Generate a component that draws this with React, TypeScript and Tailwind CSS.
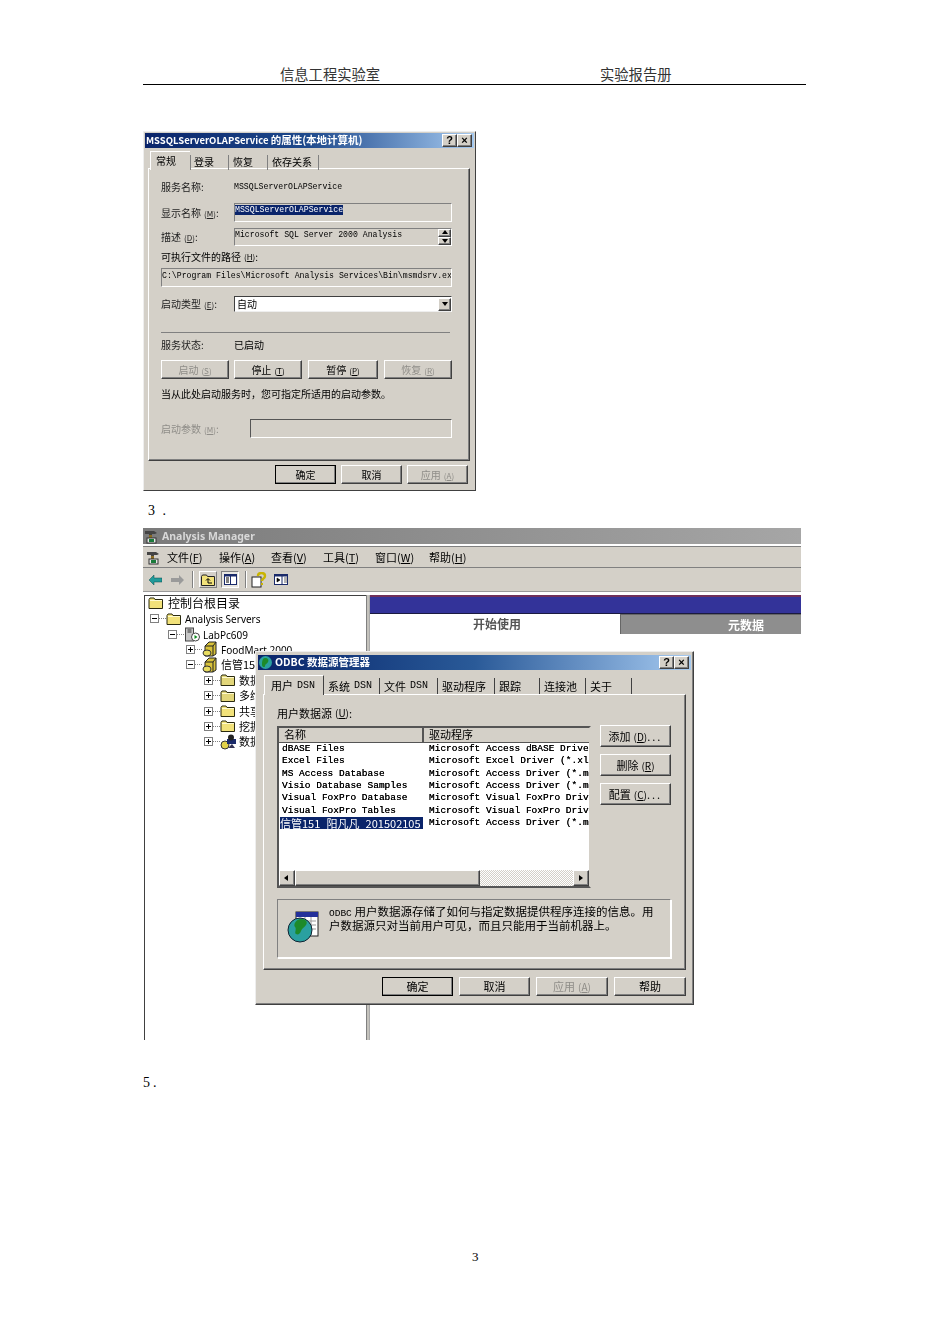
import React from "react";

const ui = "font-['Noto_Sans_CJK_SC','Noto_Sans',sans-serif]";
const mono = "font-['Liberation_Mono','Noto_Sans_CJK_SC',monospace]";
const raised = "border border-t-white border-l-white border-r-[#404040] border-b-[#404040] shadow-[inset_-1px_-1px_0_#808080] bg-[#d4d0c8]";
const sunken = "border border-t-[#808080] border-l-[#808080] border-r-white border-b-white";

function Key({ k, big }: { k: string; big?: boolean }) {
  return (
    <span className={`${big ? "text-[10px]" : "text-[8px]"} ml-[3px]`}>
      (<span className="underline">{k}</span>)
    </span>
  );
}

function Btn({ label, w, h = 19, def, off, size = "text-[10px]" }: { label: React.ReactNode; w: number; h?: number; def?: boolean; off?: boolean; size?: string }) {
  return (
    <div
      className={`${raised} ${def ? "outline outline-1 outline-black -outline-offset-1" : ""} ${off ? "text-[#8f8d88]" : "text-black"} ${size} flex items-center justify-center leading-none shrink-0 whitespace-nowrap`}
      style={{ width: w, height: h }}
    >
      <span>{label}</span>
    </div>
  );
}

function CapBtn({ children }: { children: React.ReactNode }) {
  return <div className={`${raised} w-[15px] h-[13px] flex items-center justify-center text-[11px] font-bold text-black leading-none font-['Liberation_Sans',sans-serif]`}>{children}</div>;
}

function Arrow({ dir }: { dir: "up" | "down" | "left" | "right" }) {
  const p = { up: "1,5 4,1 7,5", down: "1,2 7,2 4,6", left: "5,1 5,7 1,4", right: "2,1 2,7 6,4" }[dir];
  return (
    <svg width="8" height="8" viewBox="0 0 8 8">
      <polygon points={p} fill="#000" />
    </svg>
  );
}

function PropsWindow() {
  const lab = "w-[73px] shrink-0 text-[10px] leading-none text-[#222] whitespace-nowrap";
  const small = `${mono} text-[8.2px]`;
  return (
    <div className={`${ui} blur-[0.3px] mt-[46px] w-[333px] h-[360px] bg-[#d4d0c8] border border-l-[#eee] border-t-[#eee] border-r-[#404040] border-b-[#404040] px-[1px] pt-[1px] flex flex-col`}>
      <div className="h-[15px] bg-linear-to-r from-[#0a246a] via-[#1f4a8c] to-[#a6caf0] flex items-center pl-[1px] pr-[2px] justify-between shrink-0">
        <span className="text-white text-[9.5px] font-bold leading-none whitespace-nowrap">
          MSSQLServerOLAPService <span className="text-[10.5px]">的属性(本地计算机)</span>
        </span>
        <div className="flex"><CapBtn>?</CapBtn><CapBtn>×</CapBtn></div>
      </div>
      <div className="ml-[5px] mt-[3px] h-[19px] flex text-[10px] leading-none items-center shrink-0 relative z-10">
        <div className="w-[40px] h-[19px] bg-[#d4d0c8] border-t border-l border-white flex items-center pl-[5px]">常规</div>
        <div className="w-[38px] h-[15px] mt-[3px] border-l border-[#808080] flex items-center pl-[3px]">登录</div>
        <div className="w-[39px] h-[15px] mt-[3px] border-l border-[#808080] flex items-center pl-[4px]">恢复</div>
        <div className="w-[52px] h-[15px] mt-[3px] border-x border-[#808080] flex items-center pl-[4px]">依存关系</div>
      </div>
      <div className="mx-[3px] -mt-[2px] w-[322px] h-[293px] border border-t-white border-l-white border-r-[#404040] border-b-[#404040] shadow-[inset_-1px_-1px_0_#808080] pl-[12px] shrink-0">
        <div className="w-[291px] flex flex-col">
          <div className="mt-[11px] h-[14px] flex items-center">
            <span className={lab}>服务名称:</span>
            <span className={`${small} leading-none`}>MSSQLServerOLAPService</span>
          </div>
          <div className="mt-[9px] h-[19px] flex items-center">
            <span className={lab}>显示名称<Key k="M" />:</span>
            <div className={`${sunken} flex-1 h-full`}>
              <span className={`${small} block w-fit bg-[#0a246a] text-white leading-[10px] mt-[1px]`}>MSSQLServerOLAPService</span>
            </div>
          </div>
          <div className="mt-[6px] h-[18px] flex items-center">
            <span className={lab}>描述<Key k="D" />:</span>
            <div className={`${sunken} flex-1 h-full flex justify-between`}>
              <span className={`${small} leading-[10px] mt-[1px] whitespace-nowrap`}>Microsoft SQL Server 2000 Analysis</span>
              <div className="flex flex-col">
                <div className={`${raised} w-[13px] h-[8px] flex items-center justify-center`}><Arrow dir="up" /></div>
                <div className={`${raised} w-[13px] h-[8px] flex items-center justify-center`}><Arrow dir="down" /></div>
              </div>
            </div>
          </div>
          <div className="mt-[4px] h-[14px] flex items-center text-[10px] leading-none whitespace-pre">可执行文件的路径<Key k="H" />:</div>
          <div className={`${sunken} mt-[4px] h-[19px]`}>
            <div className={`${small} leading-[14px] whitespace-nowrap overflow-hidden`}>C:\Program Files\Microsoft Analysis Services\Bin\msmdsrv.ex</div>
          </div>
          <div className="mt-[9px] h-[16px] flex items-center">
            <span className={lab}>启动类型<Key k="E" />:</span>
            <div className="flex-1 h-full bg-white border border-t-[#404040] border-l-[#404040] border-r-white border-b-[#eee] flex items-center justify-between">
              <span className="text-[10px] leading-none pl-[2px]">自动</span>
              <div className={`${raised} w-[13px] h-[13px] flex items-center justify-center`}><Arrow dir="down" /></div>
            </div>
          </div>
          <div className="mt-[20px] h-[2px] border-t border-[#808080] w-[289px]" />
          <div className="mt-[4px] h-[14px] flex items-center">
            <span className={lab}>服务状态:</span>
            <span className="text-[10px] leading-none">已启动</span>
          </div>
          <div className="mt-[8px] flex">
            <Btn label={<>启动<Key k="S" /></>} w={68} off />
            <div className="w-[5px]" />
            <Btn label={<>停止<Key k="T" /></>} w={68} />
            <div className="w-[6px]" />
            <Btn label={<>暂停<Key k="P" /></>} w={70} />
            <div className="w-[6px]" />
            <Btn label={<>恢复<Key k="R" /></>} w={68} off />
          </div>
          <div className="mt-[8px] h-[14px] flex items-center text-[10px] leading-none whitespace-nowrap">当从此处启动服务时，您可指定所适用的启动参数。</div>
          <div className="mt-[18px] h-[19px] flex items-center">
            <span className="w-[89px] shrink-0 text-[10px] leading-none text-[#8f8d88]">启动参数<Key k="M" />:</span>
            <div className="flex-1 h-full border border-t-[#555] border-l-[#555] border-r-white border-b-white" />
          </div>
        </div>
      </div>
      <div className="mt-[4px] flex justify-end pr-[6px] gap-[5px]">
        <Btn label="确定" w={61} def />
        <Btn label="取消" w={61} />
        <Btn label={<>应用<Key k="A" /></>} w={61} off />
      </div>
    </div>
  );
}

function Folder({ dim }: { dim?: boolean }) {
  return (
    <svg width="16" height="14" viewBox="0 0 16 14" className="shrink-0">
      <path d="M1 12.5V3.5l1-1.5h4l1 1.5h7.5v9z" fill={dim ? "#e2d67a" : "#f2e27a"} stroke="#2a2a10" />
      <path d="M2 4.5h12" stroke="#fffbd0" />
    </svg>
  );
}

function Cube() {
  return (
    <svg width="16" height="16" viewBox="0 0 16 16" className="shrink-0">
      <path d="M7 1h7v12l-3 2H3V5z" fill="#d8c23a" stroke="#222" />
      <path d="M3 5h8v10M11 5l3-4" fill="none" stroke="#222" />
      <ellipse cx="5" cy="12" rx="4" ry="3" fill="#e8dc60" stroke="#333" />
    </svg>
  );
}

function Server() {
  return (
    <svg width="16" height="15" viewBox="0 0 16 15" className="shrink-0">
      <rect x="1.5" y="1" width="8" height="13" fill="#c6c6c6" stroke="#444" />
      <path d="M3.5 3h4M3.5 5h4" stroke="#333" />
      <circle cx="11.5" cy="10" r="4" fill="#fff" stroke="#444" />
      <polygon points="10.5,8 10.5,12 13.5,10" fill="#0a8a1a" />
    </svg>
  );
}

function Roles() {
  return (
    <svg width="16" height="16" viewBox="0 0 16 16" className="shrink-0">
      <ellipse cx="5" cy="11" rx="4" ry="4" fill="#e2d24a" stroke="#333" />
      <rect x="7" y="5" width="9" height="5" fill="#1a2a6a" />
      <circle cx="11" cy="3.5" r="3" fill="#222" />
      <path d="M8 14l4-4 3 4z" fill="#335" />
    </svg>
  );
}

function TreeRow({ level, box, icon, text, sans }: { level: number; box?: "+" | "-"; icon: React.ReactNode; text: string; sans?: boolean }) {
  return (
    <div className="h-[15.4px] flex items-center" style={{ paddingLeft: 5 + level * 18 }}>
      <div className="w-[9px] h-[9px] border border-[#808080] bg-white flex items-center justify-center shrink-0 relative">
        {box ? <span className="block w-[5px] h-[1px] bg-black" /> : null}
        {box === "+" ? <span className="absolute left-[3px] top-[1px] w-[1px] h-[5px] bg-black" /> : null}
      </div>
      <div className="w-[7px] border-t border-dotted border-[#808080] shrink-0" />
      {icon}
      <span className={`ml-[3px] whitespace-nowrap text-black leading-none ${sans ? "text-[10px] pt-[1px] font-['Noto_Sans',sans-serif]" : "text-[11px]"}`}>{text}</span>
    </div>
  );
}

function Menu({ k, name, w }: { k: string; name: string; w: number }) {
  return (
    <div className="text-[11px] leading-none whitespace-nowrap" style={{ width: w }}>
      {name}(<span className="underline">{k}</span>)
    </div>
  );
}

function Globe() {
  return (
    <svg width="32" height="32" viewBox="0 0 32 32" className="shrink-0">
      <rect x="9" y="1" width="22" height="24" fill="#fff" stroke="#222" />
      <rect x="9" y="1" width="22" height="5" fill="#24309a" />
      <path d="M13 10h16M13 14h16M13 18h16M18 6v18M24 6v18" stroke="#999" />
      <circle cx="13" cy="19" r="12" fill="#2aa0a0" stroke="#123" />
      <path d="M14 8c5 0 7 3 5 6s-4 3-5 6-3 4-5 3 1-5-1-7 1-8 6-8z" fill="#1d8a2a" />
    </svg>
  );
}

const Rows: [string, string][] = [
  ["dBASE Files", "Microsoft Access dBASE Drive"],
  ["Excel Files", "Microsoft Excel Driver (*.xl"],
  ["MS Access Database", "Microsoft Access Driver (*.m"],
  ["Visio Database Samples", "Microsoft Access Driver (*.m"],
  ["Visual FoxPro Database", "Microsoft Visual FoxPro Driv"],
  ["Visual FoxPro Tables", "Microsoft Visual FoxPro Driv"],
];

function OdbcDialog() {
  const tab = "h-[16px] mt-[3px] border-r border-[#404040] flex items-center pl-[4px] whitespace-nowrap";
  const dsn = `${mono} text-[10px] ml-[4px]`;
  return (
    <div className={`absolute left-[112px] top-[123px] w-[439px] h-[354px] bg-[#d4d0c8] border border-t-[#eee] border-l-[#eee] border-r-[#404040] border-b-[#404040] shadow-[inset_-1px_-1px_0_#808080] pt-[3px] flex flex-col ${ui}`}>
      <div className="mx-[2px] h-[15px] bg-linear-to-r from-[#0a246a] via-[#2a5a98] to-[#a6caf0] flex items-center justify-between pr-[2px] shrink-0">
        <div className="flex items-center">
          <svg width="15" height="15" viewBox="0 0 15 15"><circle cx="7.5" cy="7.5" r="6.5" fill="#2aa0a0" /><path d="M7 3c3 0 4 2 3 4s-3 2-3 4-3 1-3-1 0-7 3-7z" fill="#1d8a2a" /></svg>
          <span className="ml-[2px] text-white text-[10.5px] font-bold leading-none whitespace-nowrap">ODBC 数据源管理器</span>
        </div>
        <div className="flex"><CapBtn>?</CapBtn><CapBtn>×</CapBtn></div>
      </div>
      <div className="ml-[8px] mt-[5px] h-[20px] flex text-[11px] leading-none relative z-10 shrink-0">
        <div className="w-[60px] h-[20px] bg-[#d4d0c8] border-t border-l border-white border-r border-r-[#404040] flex items-center pl-[6px] whitespace-nowrap">用户<span className={dsn}>DSN</span></div>
        <div className={`${tab} w-[56px]`}>系统<span className={dsn}>DSN</span></div>
        <div className={`${tab} w-[58px]`}>文件<span className={dsn}>DSN</span></div>
        <div className={`${tab} w-[57px]`}>驱动程序</div>
        <div className={`${tab} w-[45px]`}>跟踪</div>
        <div className={`${tab} w-[46px]`}>连接池</div>
        <div className={`${tab} w-[46px]`}>关于</div>
      </div>
      <div className="ml-[7px] -mt-[1px] w-[423px] h-[276px] border border-t-white border-l-white border-r-[#404040] border-b-[#404040] shadow-[inset_-1px_-1px_0_#808080] pl-[13px] shrink-0">
        <div className="mt-[11px] h-[14px] flex items-center text-[11px] leading-none">用户数据源<Key k="U" big />:</div>
        <div className="mt-[6px] flex items-start">
          <div className="w-[314px] h-[162px] bg-white border-2 border-t-[#555] border-l-[#555] border-r-[#d4d0c8] border-b-[#555] shrink-0 flex flex-col overflow-hidden">
            <div className="h-[15px] flex shrink-0 text-[11px] leading-none bg-[#d4d0c8]">
              <div className="w-[145px] border-r-2 border-r-[#555] border-b border-b-[#555] pl-[5px] pb-[2px] flex items-center">名称</div>
              <div className="flex-1 border-b border-b-[#555] pl-[5px] pb-[2px] flex items-center">驱动程序</div>
            </div>
            <div className={`${mono} text-[9.5px] leading-[12.35px] flex-1 whitespace-pre [text-shadow:0_0_0.4px_#000]`}>
              {Rows.map((r) => (
                <div key={r[0]} className="flex h-[12.35px]">
                  <div className="w-[150px] pl-[3px]">{r[0]}</div>
                  <div className="flex-1 overflow-hidden">{r[1]}</div>
                </div>
              ))}
              <div className="flex h-[12.35px]">
                <div className="w-[150px]"><span className={`block w-[143px] ml-[1px] bg-[#0a246a] text-white [text-shadow:none] ${ui} text-[11px] leading-[12px] whitespace-nowrap`}>信管151_阳凡凡_201502105</span></div>
                <div className="flex-1 overflow-hidden">Microsoft Access Driver (*.m</div>
              </div>
            </div>
            <div className="h-[16px] flex shrink-0">
              <div className={`${raised} w-[16px] flex items-center justify-center`}><Arrow dir="left" /></div>
              <div className={`${raised} w-[185px]`} />
              <div className="flex-1 bg-[repeating-conic-gradient(#d4d0c8_0_25%,#fff_0_50%)] bg-[length:2px_2px]" />
              <div className={`${raised} w-[16px] flex items-center justify-center`}><Arrow dir="right" /></div>
            </div>
          </div>
          <div className="ml-[9px] -mt-[1px] flex flex-col gap-[7px]">
            <Btn label={<>添加<Key k="D" big /><span className="tracking-[2px]">...</span></>} w={71} h={22} size="text-[11px]" />
            <Btn label={<>删除<Key k="R" big /></>} w={71} h={22} size="text-[11px]" />
            <Btn label={<>配置<Key k="C" big /><span className="tracking-[2px]">...</span></>} w={71} h={22} size="text-[11px]" />
          </div>
        </div>
        <div className="mt-[11px] w-[394px] h-[59px] border border-t-[#808080] border-l-[#808080] border-r-white border-b-white shadow-[1px_1px_0_#fff] flex items-start pl-[9px] pt-[11px]">
          <Globe />
          <div className="ml-[10px] -mt-[6px] w-[332px] text-[11.5px] leading-[12px] text-black">
            <span className={`${mono} text-[9.5px] leading-none`}>ODBC</span> 用户数据源存储了如何与指定数据提供程序连接的信息。用户数据源只对当前用户可见，而且只能用于当前机器上。
          </div>
        </div>
      </div>
      <div className="mt-[7px] flex ml-[126px] gap-[6px]">
        <Btn label="确定" w={71} def size="text-[11px]" />
        <Btn label="取消" w={71} size="text-[11px]" />
        <Btn label={<>应用<Key k="A" big /></>} w={72} off size="text-[11px]" />
        <Btn label="帮助" w={72} size="text-[11px]" />
      </div>
    </div>
  );
}

function Hammer() {
  return (
    <svg width="15" height="15" viewBox="0 0 15 15" className="shrink-0">
      <path d="M1 2h9l3 2-2 1H8v3H5V5H1z" fill="#444" />
      <rect x="5" y="6" width="3" height="3" fill="#8a6a20" />
      <rect x="3" y="9" width="9" height="5" fill="#e8e8e8" stroke="#333" />
      <rect x="5" y="10" width="5" height="3" fill="#1a7a3a" />
    </svg>
  );
}

function AnalysisManager() {
  return (
    <div className={`relative blur-[0.3px] w-[658px] h-[512px] overflow-hidden bg-white ${ui}`}>
      <div className="h-[16px] bg-linear-to-r from-[#7b7b7b] to-[#a6a6a6] flex items-center pl-[1px]">
        <Hammer />
        <span className="ml-[3px] text-[#d8d8d8] text-[10.5px] font-bold font-['Noto_Sans',sans-serif] leading-none">Analysis Manager</span>
      </div>
      <div className="mt-[2px] h-[22px] bg-[#d4d0c8] border-t border-t-[#808080] border-b border-b-[#808080] flex items-center pl-[3px]">
        <Hammer />
        <div className="ml-[6px] flex items-center">
          <Menu name="文件" k="F" w={52} />
          <Menu name="操作" k="A" w={52} />
          <Menu name="查看" k="V" w={52} />
          <Menu name="工具" k="T" w={52} />
          <Menu name="窗口" k="W" w={54} />
          <Menu name="帮助" k="H" w={40} />
        </div>
      </div>
      <div className="h-[24px] bg-[#d4d0c8] border-b border-b-[#999] flex items-center pl-[6px]">
        <svg width="13" height="10" viewBox="0 0 13 10"><path d="M0 5l5-5v3h8v4H5v3z" fill="#1f9a9a" stroke="#0a4a4a" strokeWidth="0.5" /></svg>
        <svg width="13" height="10" viewBox="0 0 13 10" className="ml-[9px]"><path d="M13 5L8 0v3H0v4h8v3z" fill="#9a9a9a" /></svg>
        <div className="ml-[8px] w-[2px] h-[17px] border-l border-[#808080] border-r border-r-white" />
        <div className="ml-[5px] w-[18px] h-[17px] border border-t-white border-l-white border-r-[#808080] border-b-[#808080] flex items-center justify-center">
          <svg width="14" height="12" viewBox="0 0 14 12"><path d="M.5 11.5v-9l1-1.5h4l1 1.5h7v9z" fill="#f2e27a" stroke="#222" /><path d="M7 9V5M5 6.5L7 4.5 9 6.5M7 9h4" fill="none" stroke="#000" /></svg>
        </div>
        <div className="ml-[4px] w-[18px] h-[17px] border border-t-[#808080] border-l-[#808080] border-r-white border-b-white bg-[#e8e6e0] flex items-center justify-center">
          <svg width="13" height="11" viewBox="0 0 13 11"><rect x=".5" y=".5" width="12" height="10" fill="#fff" stroke="#1a2a6a" /><rect x=".5" y=".5" width="12" height="2" fill="#1a2a6a" /><path d="M6.5 1v9" stroke="#1a2a6a" /><path d="M2 4h3M2 6h3M2 8h3" stroke="#000" /></svg>
        </div>
        <div className="ml-[6px] w-[2px] h-[17px] border-l border-[#808080] border-r border-r-white" />
        <svg width="16" height="16" viewBox="0 0 16 16" className="ml-[4px]"><rect x="1" y="5" width="9" height="10" fill="#fff" stroke="#222" /><path d="M7 4c0-4 7-4 7 0 0 3-3 2-3 5" fill="none" stroke="#c9b400" strokeWidth="2.4" /><rect x="10" y="11" width="2" height="2" fill="#c9b400" /></svg>
        <svg width="15" height="11" viewBox="0 0 15 11" className="ml-[7px]"><rect x=".5" y=".5" width="13" height="10" fill="#fff" stroke="#1a2a6a" /><rect x=".5" y=".5" width="13" height="2" fill="#1a2a6a" /><path d="M8 1v9" stroke="#1a2a6a" /><path d="M3 4l3 2-3 2zM10 4h3M10 6h3M10 8h3" fill="#000" stroke="#000" strokeWidth="0.6" /></svg>
      </div>
      <div className="mt-[3px] flex h-[445px]">
        <div className="ml-[1px] w-[222px] bg-white border-l border-t border-[#404040] shrink-0">
          <div className="-mt-[1px] h-[16px] flex items-center pl-[3px]">
            <Folder />
            <span className="ml-[4px] text-[12px] leading-none">控制台根目录</span>
          </div>
          <TreeRow level={0} box="-" icon={<Folder />} text="Analysis Servers" sans />
          <TreeRow level={1} box="-" icon={<Server />} text="LabPc609" sans />
          <TreeRow level={2} box="+" icon={<Cube />} text="FoodMart 2000" sans />
          <TreeRow level={2} box="-" icon={<Cube />} text="信管151" />
          <TreeRow level={3} box="+" icon={<Folder dim />} text="数据源" />
          <TreeRow level={3} box="+" icon={<Folder dim />} text="多维数据集" />
          <TreeRow level={3} box="+" icon={<Folder />} text="共享维度" />
          <TreeRow level={3} box="+" icon={<Folder />} text="挖掘模型" />
          <TreeRow level={3} box="+" icon={<Roles />} text="数据库角色" />
        </div>
        <div className="w-[4px] bg-[#c4c2bc] border-l border-[#808080] border-r border-r-[#aaa] shrink-0" />
        <div className="flex-1 min-w-0">
          <div className="h-[19px] bg-[#333399] border-t-2 border-t-[#70305a] border-b border-b-[#1a1a40]" />
          <div className="flex h-[20px] text-[12px] font-bold leading-none">
            <div className="w-[250px] flex items-center pl-[103px] text-[#555]">开始使用</div>
            <div className="flex-1 bg-[#8e8e8e] border-l border-t border-[#666] text-white flex items-center pl-[107px]">元数据</div>
          </div>
        </div>
      </div>
      <OdbcDialog />
    </div>
  );
}

export default function App() {
  return (
    <div className="w-[950px] h-[1344px] bg-white pl-[143px] pt-[67px] font-['Liberation_Serif','Noto_Sans_CJK_SC',serif] text-black">
      <div className={`w-[663px] h-[18px] border-b border-black flex items-start text-[14.3px] leading-[14px] text-[#333] ${ui}`}>
        <span className="ml-[137px] w-[320px]">信息工程实验室</span>
        <span>实验报告册</span>
      </div>
      <PropsWindow />
      <div className="h-[37px] pl-[5px] pt-[12px] text-[14px] leading-[16px] tracking-[2px]">3 .</div>
      <AnalysisManager />
      <div className="mt-[35px] text-[14px] leading-[16px] tracking-[3px]">5.</div>
      <div className="mt-[158px] ml-[329px] text-[13px] leading-[16px]">3</div>
    </div>
  );
}
